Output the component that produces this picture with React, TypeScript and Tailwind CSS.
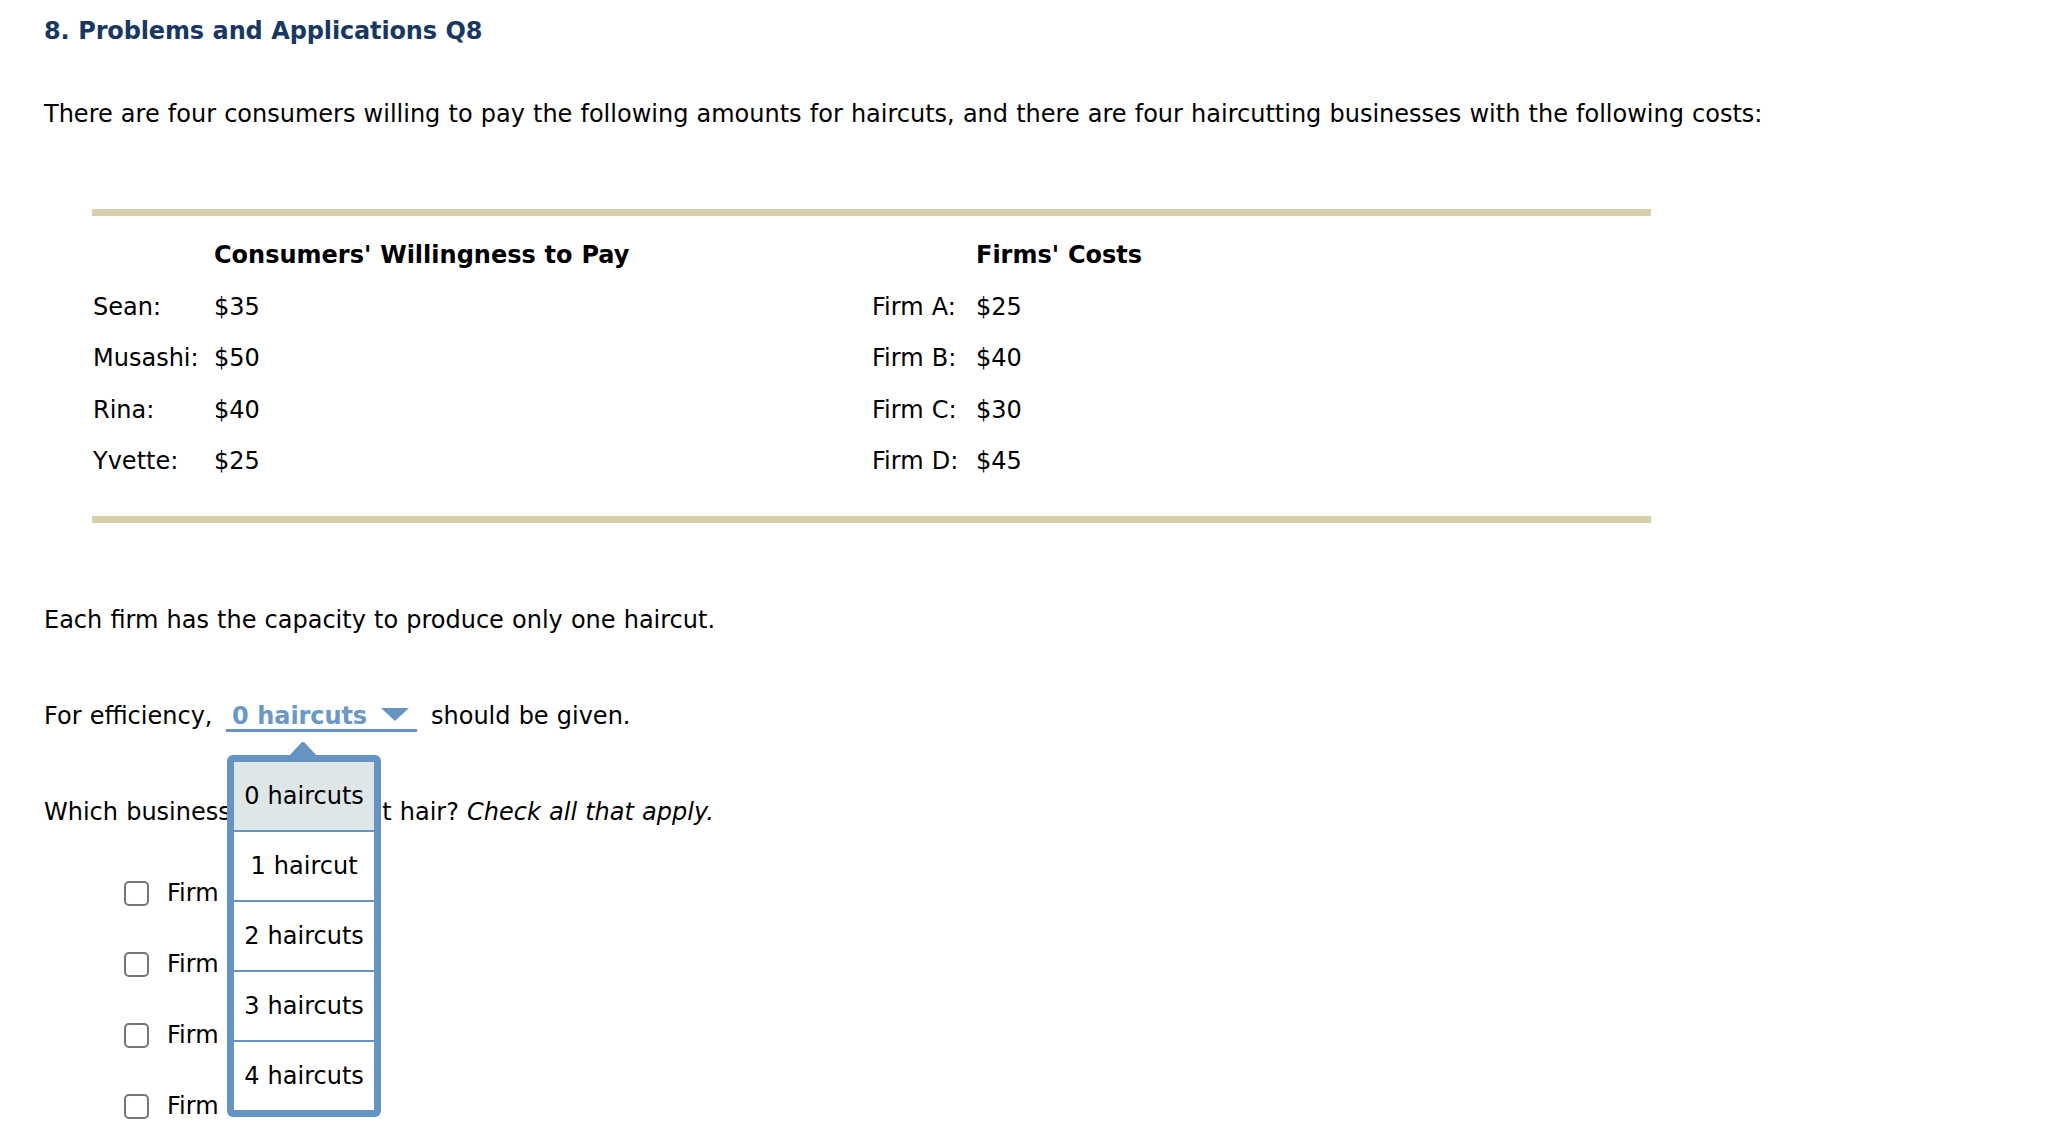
const consumers = [
  { name: 'Sean:', pay: '$35' },
  { name: 'Musashi:', pay: '$50' },
  { name: 'Rina:', pay: '$40' },
  { name: 'Yvette:', pay: '$25' },
]

const firms = [
  { name: 'Firm A:', cost: '$25' },
  { name: 'Firm B:', cost: '$40' },
  { name: 'Firm C:', cost: '$30' },
  { name: 'Firm D:', cost: '$45' },
]

const options = ['0 haircuts', '1 haircut', '2 haircuts', '3 haircuts', '4 haircuts']

function Rule() {
  return <div className="h-[7px] bg-[#d9cfaa]" />
}

function CostTable() {
  return (
    <div className="mt-[79px] ml-[48px] w-[1559px]">
      <Rule />
      <div className="grid grid-cols-[122px_658px_104px_1fr] pt-[13px] pb-[29px]">
        <div className="h-[52px]" />
        <div className="h-[52px] flex items-center font-bold">Consumers' Willingness to Pay</div>
        <div className="h-[52px]" />
        <div className="h-[52px] flex items-center font-bold">Firms' Costs</div>
        {consumers.map((c, i) => (
          <div key={c.name} className="contents">
            <div className="h-[51.5px] flex items-center pl-[1px]">{c.name}</div>
            <div className="h-[51.5px] flex items-center">{c.pay}</div>
            <div className="h-[51.5px] flex items-center">{firms[i].name}</div>
            <div className="h-[51.5px] flex items-center">{firms[i].cost}</div>
          </div>
        ))}
      </div>
      <Rule />
    </div>
  )
}

function HaircutSelect() {
  return (
    <div className="relative h-[32px] flex items-center pl-[6px] pr-[8px] pt-[3px] border-b-[3px] border-[#6593c4]">
      <span className="font-bold text-[#6a98c8] tracking-[-0.1px]">0 haircuts</span>
      <svg width="28" height="13" viewBox="0 0 28 13" className="ml-[14px] mt-[-4px]">
        <polygon points="0,0 28,0 14,13" fill="#6593c4" />
      </svg>

      <div className="absolute left-[1px] top-[55px] z-10 w-[154px]">
        <svg width="28" height="15" viewBox="0 0 28 15" className="absolute left-[62px] top-[-14px]">
          <path d="M0 15 L12 2 Q14 0 16 2 L28 15 Z" fill="#6593c4" />
        </svg>
        <div className="rounded-[6px] border-[7px] border-[#6593c4] bg-white flex flex-col">
          {options.map((o, i) => (
            <div
              key={o}
              className={`flex items-center justify-center font-normal text-black ${
                i === 0 ? 'h-[68px] bg-[#dfe6e8]' : 'h-[70px] bg-white border-t-[2px] border-[#6593c4]'
              }`}
            >
              {o}
            </div>
          ))}
        </div>
      </div>
    </div>
  )
}

function FirmCheck({ label }: { label: string }) {
  return (
    <div className="flex items-center h-[32px] ml-[80px]">
      <span className="w-[25px] h-[25px] rounded-[5px] border-2 border-[#767676] bg-white" />
      <span className="ml-[18px]">{label}</span>
    </div>
  )
}

export default function App() {
  return (
    <div className="min-h-screen bg-white text-black pl-[44px] pt-[15px] text-[24px] leading-[32px] font-['DejaVu_Sans',Verdana,sans-serif] [word-spacing:0.5px]">
      <h1 className="font-bold text-[#183864] tracking-[-0.15px]">8. Problems and Applications Q8</h1>

      <p className="mt-[51px]">
        There are four consumers willing to pay the following amounts for haircuts, and there are four haircutting
        businesses with the following costs:
      </p>

      <CostTable />

      <p className="mt-[81px]">Each firm has the capacity to produce only one haircut.</p>

      <div className="mt-[64px] flex items-center h-[32px]">
        <span className="w-[182px] shrink-0">For efficiency,</span>
        <HaircutSelect />
        <span className="ml-[14px]">should be given.</span>
      </div>

      <p className="mt-[64px]">
        Which businesses should cut hair? <i>Check all that apply.</i>
      </p>

      <div className="mt-[49px] flex flex-col gap-[39px] pb-[40px]">
        <FirmCheck label="Firm A" />
        <FirmCheck label="Firm B" />
        <FirmCheck label="Firm C" />
        <FirmCheck label="Firm D" />
      </div>
    </div>
  )
}
